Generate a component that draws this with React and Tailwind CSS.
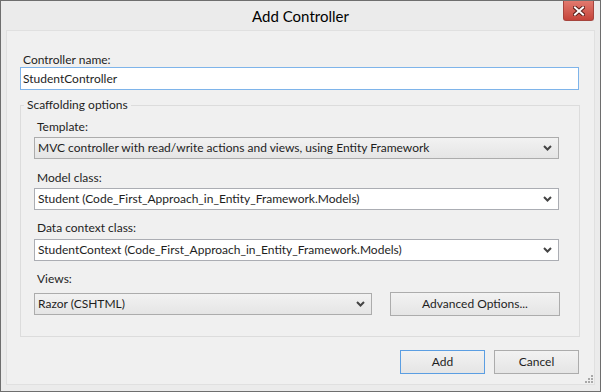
import React from "react";

const Chevron = () => (
  <svg width="9" height="6" viewBox="0 0 9 6" className="shrink-0">
    <polyline points="1,1 4.5,4.5 8,1" fill="none" stroke="#444" strokeWidth="2" />
  </svg>
);

const Combo = ({ value, editable, className = "" }) => (
  <div
    className={`flex items-center h-[22px] border pl-[3px] pr-[6px] ${
      editable
        ? "bg-white border-[#abadb3]"
        : "bg-gradient-to-b from-[#f2f2f2] to-[#e5e5e5] border-[#acacac]"
    } ${className}`}
  >
    <span className="flex-1 truncate leading-[20px]">{value}</span>
    <Chevron />
  </div>
);

const Button = ({ children, primary, className = "" }) => (
  <button
    className={`h-[24px] border bg-gradient-to-b from-[#f2f2f2] to-[#e5e5e5] leading-[22px] text-center ${
      primary ? "border-[#5b9ee2]" : "border-[#acacac]"
    } ${className}`}
  >
    {children}
  </button>
);

const CloseButton = () => (
  <div className="absolute top-0 right-[6px] w-[31px] h-[20px] rounded-b-[3px] border border-t-0 border-[#a6443d] bg-gradient-to-b from-[#e2796e] to-[#c5433a] flex items-center justify-center">
    <svg width="12" height="10" viewBox="0 0 12 10">
      <g strokeLinecap="square">
        <path d="M2 1.5 L10 8.5 M10 1.5 L2 8.5" stroke="#5a1f1a" strokeWidth="4" />
        <path d="M2 1.5 L10 8.5 M10 1.5 L2 8.5" stroke="#fff" strokeWidth="2" />
      </g>
    </svg>
  </div>
);

const Label = ({ children, className = "" }) => (
  <div className={`pl-[3px] leading-[16px] ${className}`}>{children}</div>
);

export default function App() {
  return (
    <div
      className="w-[601px] h-[392px] border border-[#6e6e6e] bg-[#ebebeb] flex flex-col text-[12px] text-[#1e1e1e]"
      style={{ fontFamily: "Lato, 'Noto Sans', sans-serif" }}
    >
      <div className="relative h-[29px] shrink-0 flex items-center justify-center">
        <span className="text-[15px] text-black pt-[1px]">Add Controller</span>
        <CloseButton />
      </div>

      <div className="relative flex-1 mx-[5px] mb-[6px] bg-[#f0f0f0] border border-[#e0e0e0] pt-[21px] pl-[13px] pr-[15px] flex flex-col">
        <Label>Controller name:</Label>
        <div className="mt-[-1px] h-[23px] border border-[#7eb4ea] bg-white pl-[2px] leading-[21px]">
          StudentController
        </div>

        <fieldset className="mt-[7px] mr-[-1px] border border-[#dcdcdc] pl-[13px] pr-[20px] pb-[20px]">
          <legend className="ml-[-10px] px-[3px] leading-[16px]">Scaffolding options</legend>

          <Label className="mt-[6px]">Template:</Label>
          <Combo className="mt-[2px]" value="MVC controller with read/write actions and views, using Entity Framework" />

          <Label className="mt-[11px]">Model class:</Label>
          <Combo className="mt-[2px]" editable value="Student (Code_First_Approach_in_Entity_Framework.Models)" />

          <Label className="mt-[10px]">Data context class:</Label>
          <Combo className="mt-[3px]" editable value="StudentContext (Code_First_Approach_in_Entity_Framework.Models)" />

          <Label className="mt-[10px]">Views:</Label>
          <div className="mt-[5px] flex items-center">
            <Combo className="w-[338px]" value="Razor (CSHTML)" />
            <Button className="ml-[18px] flex-1 mr-[-1px]">Advanced Options...</Button>
          </div>
        </fieldset>

        <div className="mt-[13px] flex justify-end gap-[9px]">
          <Button primary className="w-[85px]">Add</Button>
          <Button className="w-[85px]">Cancel</Button>
        </div>

        <div className="absolute right-[1px] bottom-[1px] grid grid-cols-3 gap-[1px] w-[8px]">
          <span />
          <span />
          <span className="w-[2px] h-[2px] bg-[#a8a8a8]" />
          <span />
          <span className="w-[2px] h-[2px] bg-[#a8a8a8]" />
          <span className="w-[2px] h-[2px] bg-[#a8a8a8]" />
          <span className="w-[2px] h-[2px] bg-[#a8a8a8]" />
          <span className="w-[2px] h-[2px] bg-[#a8a8a8]" />
          <span className="w-[2px] h-[2px] bg-[#a8a8a8]" />
        </div>
      </div>
    </div>
  );
}
